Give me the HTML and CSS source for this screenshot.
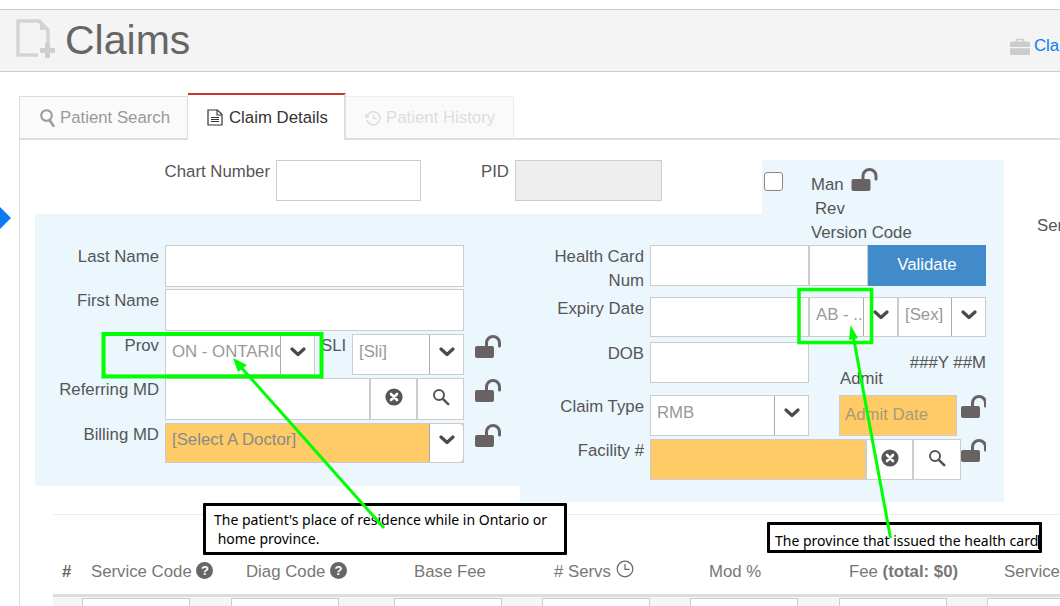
FILE: index.html
```html
<!DOCTYPE html>
<html lang="en">
<head>
<meta charset="utf-8">
<title>Claims</title>
<link rel="stylesheet" href="styles.css">
</head>
<body>
<svg class="defs" width="0" height="0" aria-hidden="true">
  <symbol id="i-lock" viewBox="0 0 27 23"><rect x="0" y="11" width="19" height="12" rx="2" fill="#686362"/><path d="M11.5 12V8a6.5 6.5 0 0 1 13 0v3" fill="none" stroke="#686362" stroke-width="3" stroke-linecap="round"/></symbol>
  <symbol id="i-chev" viewBox="0 0 16 10"><path d="M2 2l6 5.5L14 2" fill="none" stroke="#4a4a4a" stroke-width="3.2" stroke-linecap="round" stroke-linejoin="round"/></symbol>
  <symbol id="i-clear" viewBox="0 0 18 18"><circle cx="9" cy="9" r="8.6" fill="#555"/><path d="M6 6l6 6M12 6l-6 6" stroke="#fff" stroke-width="2.6" stroke-linecap="round"/></symbol>
  <symbol id="i-search" viewBox="0 0 18 18"><circle cx="7" cy="7" r="5" fill="none" stroke="currentColor" stroke-width="2"/><path d="M10.8 10.8L16.2 16.2" stroke="currentColor" stroke-width="2.6" stroke-linecap="round"/></symbol>
</svg>

<div class="page">
  <header class="page-head">
    <svg class="doc-plus" width="40" height="40" viewBox="0 0 40 40" aria-hidden="true">
      <path d="M32 24V11L23 2H2v34h20" fill="none" stroke="#d3d3d3" stroke-width="3.5"/>
      <path d="M24 3v8h8z" fill="#d3d3d3"/>
      <path d="M29 24h5v5h5v5h-5v5h-5v-5h-5v-5h5z" fill="#cfcfcf"/>
    </svg>
    <h1 class="page-title">Claims</h1>
    <a class="crumb" href="#">
      <svg width="20" height="17" viewBox="0 0 20 17" aria-hidden="true">
        <path d="M6.5 4V1.5h7V4" fill="none" stroke="#ccc" stroke-width="1.6"/>
        <path d="M1.5 3.5h17A1.5 1.5 0 0 1 20 5v4H0V5a1.5 1.5 0 0 1 1.5-1.5zM0 10.2h20V15.5A1.5 1.5 0 0 1 18.5 17H1.5A1.5 1.5 0 0 1 0 15.5z" fill="#ccc"/>
      </svg>
      <span>Claims</span>
    </a>
  </header>

  <main class="main">
    <nav class="tabs">
      <div class="tab tab-search">
        <svg class="tab-icon" width="15" height="18" viewBox="0 0 15 18" aria-hidden="true">
          <circle cx="6.500" cy="6.500" r="5.300" fill="none" stroke="#999" stroke-width="2"/>
          <path d="M9.500 11L13.500 17" stroke="#999" stroke-width="2.400" stroke-linecap="round"/>
        </svg>
        Patient Search
      </div>
      <div class="tab tab-active">
        <svg class="tab-icon" width="16" height="17" viewBox="0 0 16 17" aria-hidden="true">
          <path d="M1 1h9.5L15 5.5V16H1z" fill="none" stroke="#333" stroke-width="1.2"/>
          <path d="M10 1v5h5M4 8.5h8M4 10.5h8M4 12.5h8" fill="none" stroke="#333" stroke-width="1.1"/>
        </svg>
        Claim Details
      </div>
      <div class="tab tab-disabled">
        <svg class="tab-icon" width="16" height="16" viewBox="0 0 16 16" aria-hidden="true">
          <path d="M2.4 5.5A6.6 6.6 0 1 1 2 10" fill="none" stroke="#ddd" stroke-width="1.5"/>
          <path d="M0 3.5l4.8 3.2L0.3 8z" fill="#ddd"/>
          <path d="M8.5 4.5V8.5H12" fill="none" stroke="#ddd" stroke-width="1.4"/>
        </svg>
        Patient History
      </div>
      <div class="tab-rest"></div>
    </nav>

    <section class="content">
      <div class="chart-row">
        <label class="chart-label">Chart Number</label>
        <input class="field chart-input" type="text">
        <label class="pid-label">PID</label>
        <input class="field pid-input" type="text" disabled>
        <div class="man-box">
          <span class="check"></span>
          <div class="man-stack">
            <div class="man-line">Man <svg class="lock lock-man" width="28" height="23" aria-hidden="true"><use href="#i-lock"/></svg></div>
            <div class="rev-line">Rev</div>
          </div>
        </div>
      </div>

      <div class="form-panel">
        <div class="col col-left">
          <div class="row">
            <label class="lbl">Last Name</label>
            <input class="field grow" type="text">
          </div>
          <div class="row">
            <label class="lbl">First Name</label>
            <input class="field grow" type="text">
          </div>
          <div class="row">
            <label class="lbl">Prov</label>
            <div class="sel w-prov"><span class="sel-txt">ON - ONTARIO</span><span class="caret"><svg width="16" height="10" aria-hidden="true"><use href="#i-chev"/></svg></span></div>
            <label class="lbl-sli">SLI</label>
            <div class="sel w-sli"><span class="sel-txt">[Sli]</span><span class="caret"><svg width="16" height="10" aria-hidden="true"><use href="#i-chev"/></svg></span></div>
            <svg class="lock" width="27" height="23" aria-hidden="true"><use href="#i-lock"/></svg>
          </div>
          <div class="row">
            <label class="lbl">Referring MD</label>
            <div class="lookup grow">
              <input class="lookup-input" type="text">
              <span class="addon add-clear"><svg width="18" height="18" aria-hidden="true"><use href="#i-clear"/></svg></span>
              <span class="addon add-search"><svg width="18" height="18" aria-hidden="true"><use href="#i-search"/></svg></span>
            </div>
            <svg class="lock" width="27" height="23" aria-hidden="true"><use href="#i-lock"/></svg>
          </div>
          <div class="row row-short">
            <label class="lbl">Billing MD</label>
            <div class="sel sel-req grow"><span class="sel-txt">[Select A Doctor]</span><span class="caret"><svg width="16" height="10" aria-hidden="true"><use href="#i-chev"/></svg></span></div>
            <svg class="lock" width="27" height="23" aria-hidden="true"><use href="#i-lock"/></svg>
          </div>
        </div>

        <div class="col col-right">
          <div class="version-line">Version Code</div>
          <div class="rrow rrow-card">
            <label class="lbl">Health Card Num</label>
            <input class="field w-card" type="text">
            <input class="field w-ver" type="text">
            <button class="validate" type="button">Validate</button>
          </div>
          <div class="rrow rrow-expiry">
            <label class="lbl">Expiry Date</label>
            <input class="field w-card" type="text">
            <div class="sel w-ab"><span class="sel-txt">AB - ..</span><span class="caret"><svg width="16" height="10" aria-hidden="true"><use href="#i-chev"/></svg></span></div>
            <div class="sel w-sex"><span class="sel-txt">[Sex]</span><span class="caret"><svg width="16" height="10" aria-hidden="true"><use href="#i-chev"/></svg></span></div>
          </div>
          <div class="rrow rrow-dob">
            <label class="lbl">DOB</label>
            <input class="field w-card" type="text">
            <div class="age">
              <div class="age-val">###Y ##M</div>
              <div class="admit-lbl">Admit</div>
            </div>
          </div>
          <div class="rrow rrow-claim">
            <label class="lbl">Claim Type</label>
            <div class="sel w-card"><span class="sel-txt">RMB</span><span class="caret"><svg width="16" height="10" aria-hidden="true"><use href="#i-chev"/></svg></span></div>
            <input class="field admit-input" type="text" placeholder="Admit Date">
            <span class="lock-clip"><svg class="lock" width="27" height="23" aria-hidden="true"><use href="#i-lock"/></svg></span>
          </div>
          <div class="rrow">
            <label class="lbl">Facility #</label>
            <div class="lookup w-fac">
              <input class="lookup-input input-req" type="text">
              <span class="addon add-clear"><svg width="18" height="18" aria-hidden="true"><use href="#i-clear"/></svg></span>
              <span class="addon add-search"><svg width="18" height="18" aria-hidden="true"><use href="#i-search"/></svg></span>
            </div>
            <span class="lock-clip lock-clip-fac"><svg class="lock" width="27" height="23" aria-hidden="true"><use href="#i-lock"/></svg></span>
          </div>
        </div>

        <div class="col-extra">Service Date</div>
      </div>

      <div class="services">
        <div class="svc-grid svc-head">
          <div class="th-num">#</div>
          <div class="th th-1">Service Code <span class="q">?</span></div>
          <div class="th th-2">Diag Code <span class="q">?</span></div>
          <div class="th th-3">Base Fee</div>
          <div class="th th-4"># Servs
            <svg class="clock" width="18" height="18" viewBox="0 0 18 18" aria-hidden="true"><circle cx="9" cy="9" r="7.8" fill="none" stroke="#666" stroke-width="1.2"/><path d="M9 4v5.3h4.5" fill="none" stroke="#666" stroke-width="1.2"/></svg>
          </div>
          <div class="th th-5">Mod %</div>
          <div class="th th-6">Fee <b>(total: $0)</b></div>
          <div class="th th-7">Service Location</div>
        </div>
        <div class="svc-grid svc-row">
          <div></div>
          <input class="field svc-input" type="text">
          <input class="field svc-input" type="text">
          <input class="field svc-input" type="text">
          <input class="field svc-input" type="text">
          <input class="field svc-input" type="text">
          <input class="field svc-input" type="text">
          <input class="field svc-input" type="text">
        </div>
      </div>
    </section>
  </main>

  <span class="diamond"></span>

  <div class="note note-prov">The patient's place of residence while in Ontario or
 home province.</div>
  <div class="note note-card">The province that issued the health card<span class="cursor"></span></div>

  <svg class="overlay" width="1060" height="606" viewBox="0 0 1060 606" aria-hidden="true">
    <rect x="103.500" y="334" width="218" height="42.500" fill="none" stroke="#00ff00" stroke-width="4"/>
    <rect x="799" y="289.500" width="72.500" height="53" fill="none" stroke="#00ff00" stroke-width="3.500"/>
    <path d="M384 528L240 366" stroke="#00ff00" stroke-width="3" fill="none"/>
    <path d="M233 358L238 372L247 365z" fill="#00ff00"/>
    <path d="M890.500 538L853 335" stroke="#00ff00" stroke-width="3" fill="none"/>
    <path d="M850.500 325L849 340L858 338z" fill="#00ff00"/>
  </svg>
</div>
</body>
</html>
```
FILE: styles.css
```css
* { box-sizing: border-box; }
html, body { margin: 0; padding: 0; }
body {
  width: 1060px;
  height: 606px;
  overflow: hidden;
  background: #fff;
  color: #555;
  font: 16.8px/24px "Liberation Sans", Arial, sans-serif;
}
.defs { position: absolute; }
.page { position: relative; width: 1060px; height: 606px; overflow: hidden; padding-top: 9px; }

/* header */
.page-head {
  display: flex;
  align-items: center;
  width: 1110px;
  height: 63px;
  padding-left: 16px;
  background: #f4f4f4;
  border-top: 1px solid #ccc;
  border-bottom: 1px solid #ccc;
}
.doc-plus { margin: -3px 0 0 0; flex: none; }
.page-title { margin: -2px 0 0 9px; font-size: 41px; line-height: 50px; font-weight: 400; color: #666; }
.crumb {
  display: flex; align-items: center; gap: 4px;
  flex: 0 0 100px;
  margin: 11px 0 0 auto;
  color: #0a7bf3;
  text-decoration: none;
}

/* tabs */
.main { margin: 21px 0 0 19px; width: 1100px; }
.tabs { display: flex; align-items: flex-end; height: 47px; }
.tab { display: flex; align-items: center; height: 44px; gap: 5px; }
.tab-icon { flex: none; }
.tab-search {
  width: 169px; padding-left: 20px;
  background: #fafafa; color: #999;
  border: 1px solid #ddd; border-bottom-width: 2px;
}
.tab-active {
  width: 158px; height: 47px; padding-left: 19px; gap: 6px;
  background: #fff; color: #333;
  border-top: 2px solid #c9362b;
  border-right: 2px solid #ddd;
}
.tab-disabled {
  width: 168px; padding-left: 19px;
  background: #fafafa; color: #ddd;
  border: 1px solid #eee; border-left: 0; border-bottom: 2px solid #ddd;
}
.tab-rest { flex: 1; height: 2px; background: #ddd; }

/* content */
.content { border-left: 1px solid #ddd; height: 480px; }
.chart-row { display: flex; height: 74px; padding-top: 20px; }
.field {
  display: block;
  border: 1px solid #ccc;
  background: #fff;
  height: 41px;
  padding: 0 6px 6px;
  margin: 0;
  font: inherit;
  border-radius: 0;
  outline: 0;
}
.chart-label { width: 250px; text-align: right; color: #555; white-space: nowrap; }
.chart-input { width: 145px; margin-left: 6px; }
.pid-label { width: 88px; text-align: right; }
.pid-input { width: 147px; margin-left: 6px; background: #eee; }
.man-box { display: flex; width: 242px; height: 54px; margin-left: 100px; background: #ebf7fd; }
.check {
  flex: none; width: 19px; height: 19px; margin: 12px 0 0 2px;
  background: #fff; border: 1.5px solid #888; border-radius: 3px;
}
.man-stack { margin-left: 28px; padding-top: 13px; white-space: nowrap; }
.man-line { height: 24px; display: flex; align-items: flex-start; gap: 7px; }
.lock-man { margin-top: -5px; }
.rev-line { padding-left: 4px; }

.form-panel { display: grid; grid-template-columns: 485px 484px auto; align-items: start; margin-left: 15px; }
.col { background: #ebf7fd; }
.col-left { height: 272px; padding: 31px 0 0 1px; display: flex; flex-direction: column; gap: 2.9px; }
.col-right { height: 288px; padding-top: 7px; }
.col-extra { margin: 0 0 0 33px; white-space: nowrap; }

.row { display: flex; height: 41.5px; gap: 6px; padding-right: 56px; }
.row-short { height: 40px; }
.row .field, .row .sel, .row .lookup { height: 100%; }
.lbl { flex: none; width: 123px; text-align: right; color: #555; }
.grow { flex: 1; min-width: 0; }
.lock { flex: none; display: block; }
.row > .lock { margin: 1px -38px 0 5px; }

.sel { display: flex; border: 1px solid #ccc; background: #fff; color: #999; }
.sel-txt {
  flex: 1; min-width: 0; overflow: hidden; white-space: nowrap;
  padding: 0 0 5px 6px; display: flex; align-items: center;
}
.caret {
  flex: none; width: 34px; border-left: 1px solid #aaa;
  display: flex; align-items: center; justify-content: center; padding-bottom: 5px;
  background: #fff; border-radius: 0 4px 4px 0;
}
.sel-req { background: #fecb66; color: #8a8a8a; }
.w-prov { flex: none; width: 150px; }
.lbl-sli { flex: none; width: 25px; white-space: nowrap; }
.w-sli { flex: none; width: 112px; }
.lookup { display: flex; border: 1px solid #ccc; background: #fff; }
.lookup-input { flex: 1; min-width: 0; border: 0; padding: 0; outline: 0; background: transparent; }
.input-req { background: #fecb66; }
.addon {
  flex: none; display: flex; align-items: center; justify-content: center;
  border-left: 2px solid #ccc; padding-bottom: 4px; color: #555;
}
.add-clear { width: 47px; }
.add-search { width: 47px; }

.version-line { height: 24px; margin-left: 291px; line-height: 24px; white-space: nowrap; }
.rrow { display: flex; height: 41px; }
.rrow > .lbl { width: 124px; margin-right: 6px; }
.rrow-card { margin-bottom: 11px; }
.rrow-expiry { height: 40px; margin-bottom: 5px; }
.rrow-expiry .field, .rrow-expiry .sel { height: 100%; }
.rrow-dob { margin-bottom: 12px; }
.rrow-claim { margin-bottom: 3px; }
.w-card { flex: none; width: 159px; }
.w-ver { flex: none; width: 59px; }
.validate {
  width: 118px; height: 41px; padding: 0 0 1px;
  border: 0; background: #428bca; color: #fff; font: inherit;
}
.w-ab { flex: none; width: 89px; }
.w-sex { flex: none; width: 88px; }
.age { flex: 1; padding-top: 13px; padding-right: 18px; line-height: 16px; height: 45px; white-space: nowrap; }
.age-val { text-align: right; width: 177px; }
.admit-lbl { margin-left: 31px; }
.admit-input { width: 118px; margin-left: 30px; padding: 0 0 1px 5px; background: #fecb66; }
.admit-input::placeholder { color: #a89a78; opacity: 1; }
.lock-clip { flex: none; width: 25px; margin-left: 4px; overflow: hidden; height: 24px; }
.lock-clip-fac { margin-left: 0; }
.w-fac { flex: none; width: 311px; height: 41px; }
.w-fac .add-search { width: 48px; }

/* services */
.services { margin: 12px 0 0 33px; border-top: 1px solid #eee; }
.svc-grid { display: grid; grid-template-columns: 29px 149px 163px 148px 148px 149px 148px 148px; }
.svc-head { height: 79px; align-items: end; padding-bottom: 10px; color: #777; white-space: nowrap; }
.th-num { padding-left: 9px; font-weight: 700; color: #666; }
.th-1 { padding-left: 9px; }
.th-2 { padding-left: 15px; }
.th-3 { padding-left: 20px; }
.th-4 { padding-left: 12px; }
.th-5 { padding-left: 19px; }
.th-6 { padding-left: 10px; }
.th-7 { padding-left: 17px; }
.q {
  display: inline-block; width: 17px; height: 17px; margin-left: 0;
  border-radius: 50%; background: #666; color: #fff;
  font-size: 13px; font-weight: 700; line-height: 17px; text-align: center;
  vertical-align: 2px;
}
.clock { vertical-align: -1px; }
.svc-row { height: 40px; padding-top: 1px; background: #f5f5f5; border-top: 3px solid #ddd; }
.svc-input { width: 108px; height: 40px; }

/* overlays */
.diamond {
  position: absolute; left: -11px; top: 207px;
  width: 22px; height: 22px;
  background: #0a7bf3;
  clip-path: polygon(50% 0, 100% 50%, 50% 100%, 0 50%);
}
.note {
  position: absolute;
  background: #fff; border: 3px solid #000; border-radius: 1px;
  color: #000;
  font: 14px/19px "Noto Sans", sans-serif;
  white-space: pre;
}
.note-prov { left: 203px; top: 503px; width: 364px; height: 52px; padding: 4px 0 0 8px; }
.note-card { left: 767px; top: 522px; width: 275px; height: 31px; padding: 6px 0 0 5px; }
.cursor { display: inline-block; width: 1px; height: 14px; background: #000; vertical-align: -3px; }
.overlay { position: absolute; left: 0; top: 0; }
```
